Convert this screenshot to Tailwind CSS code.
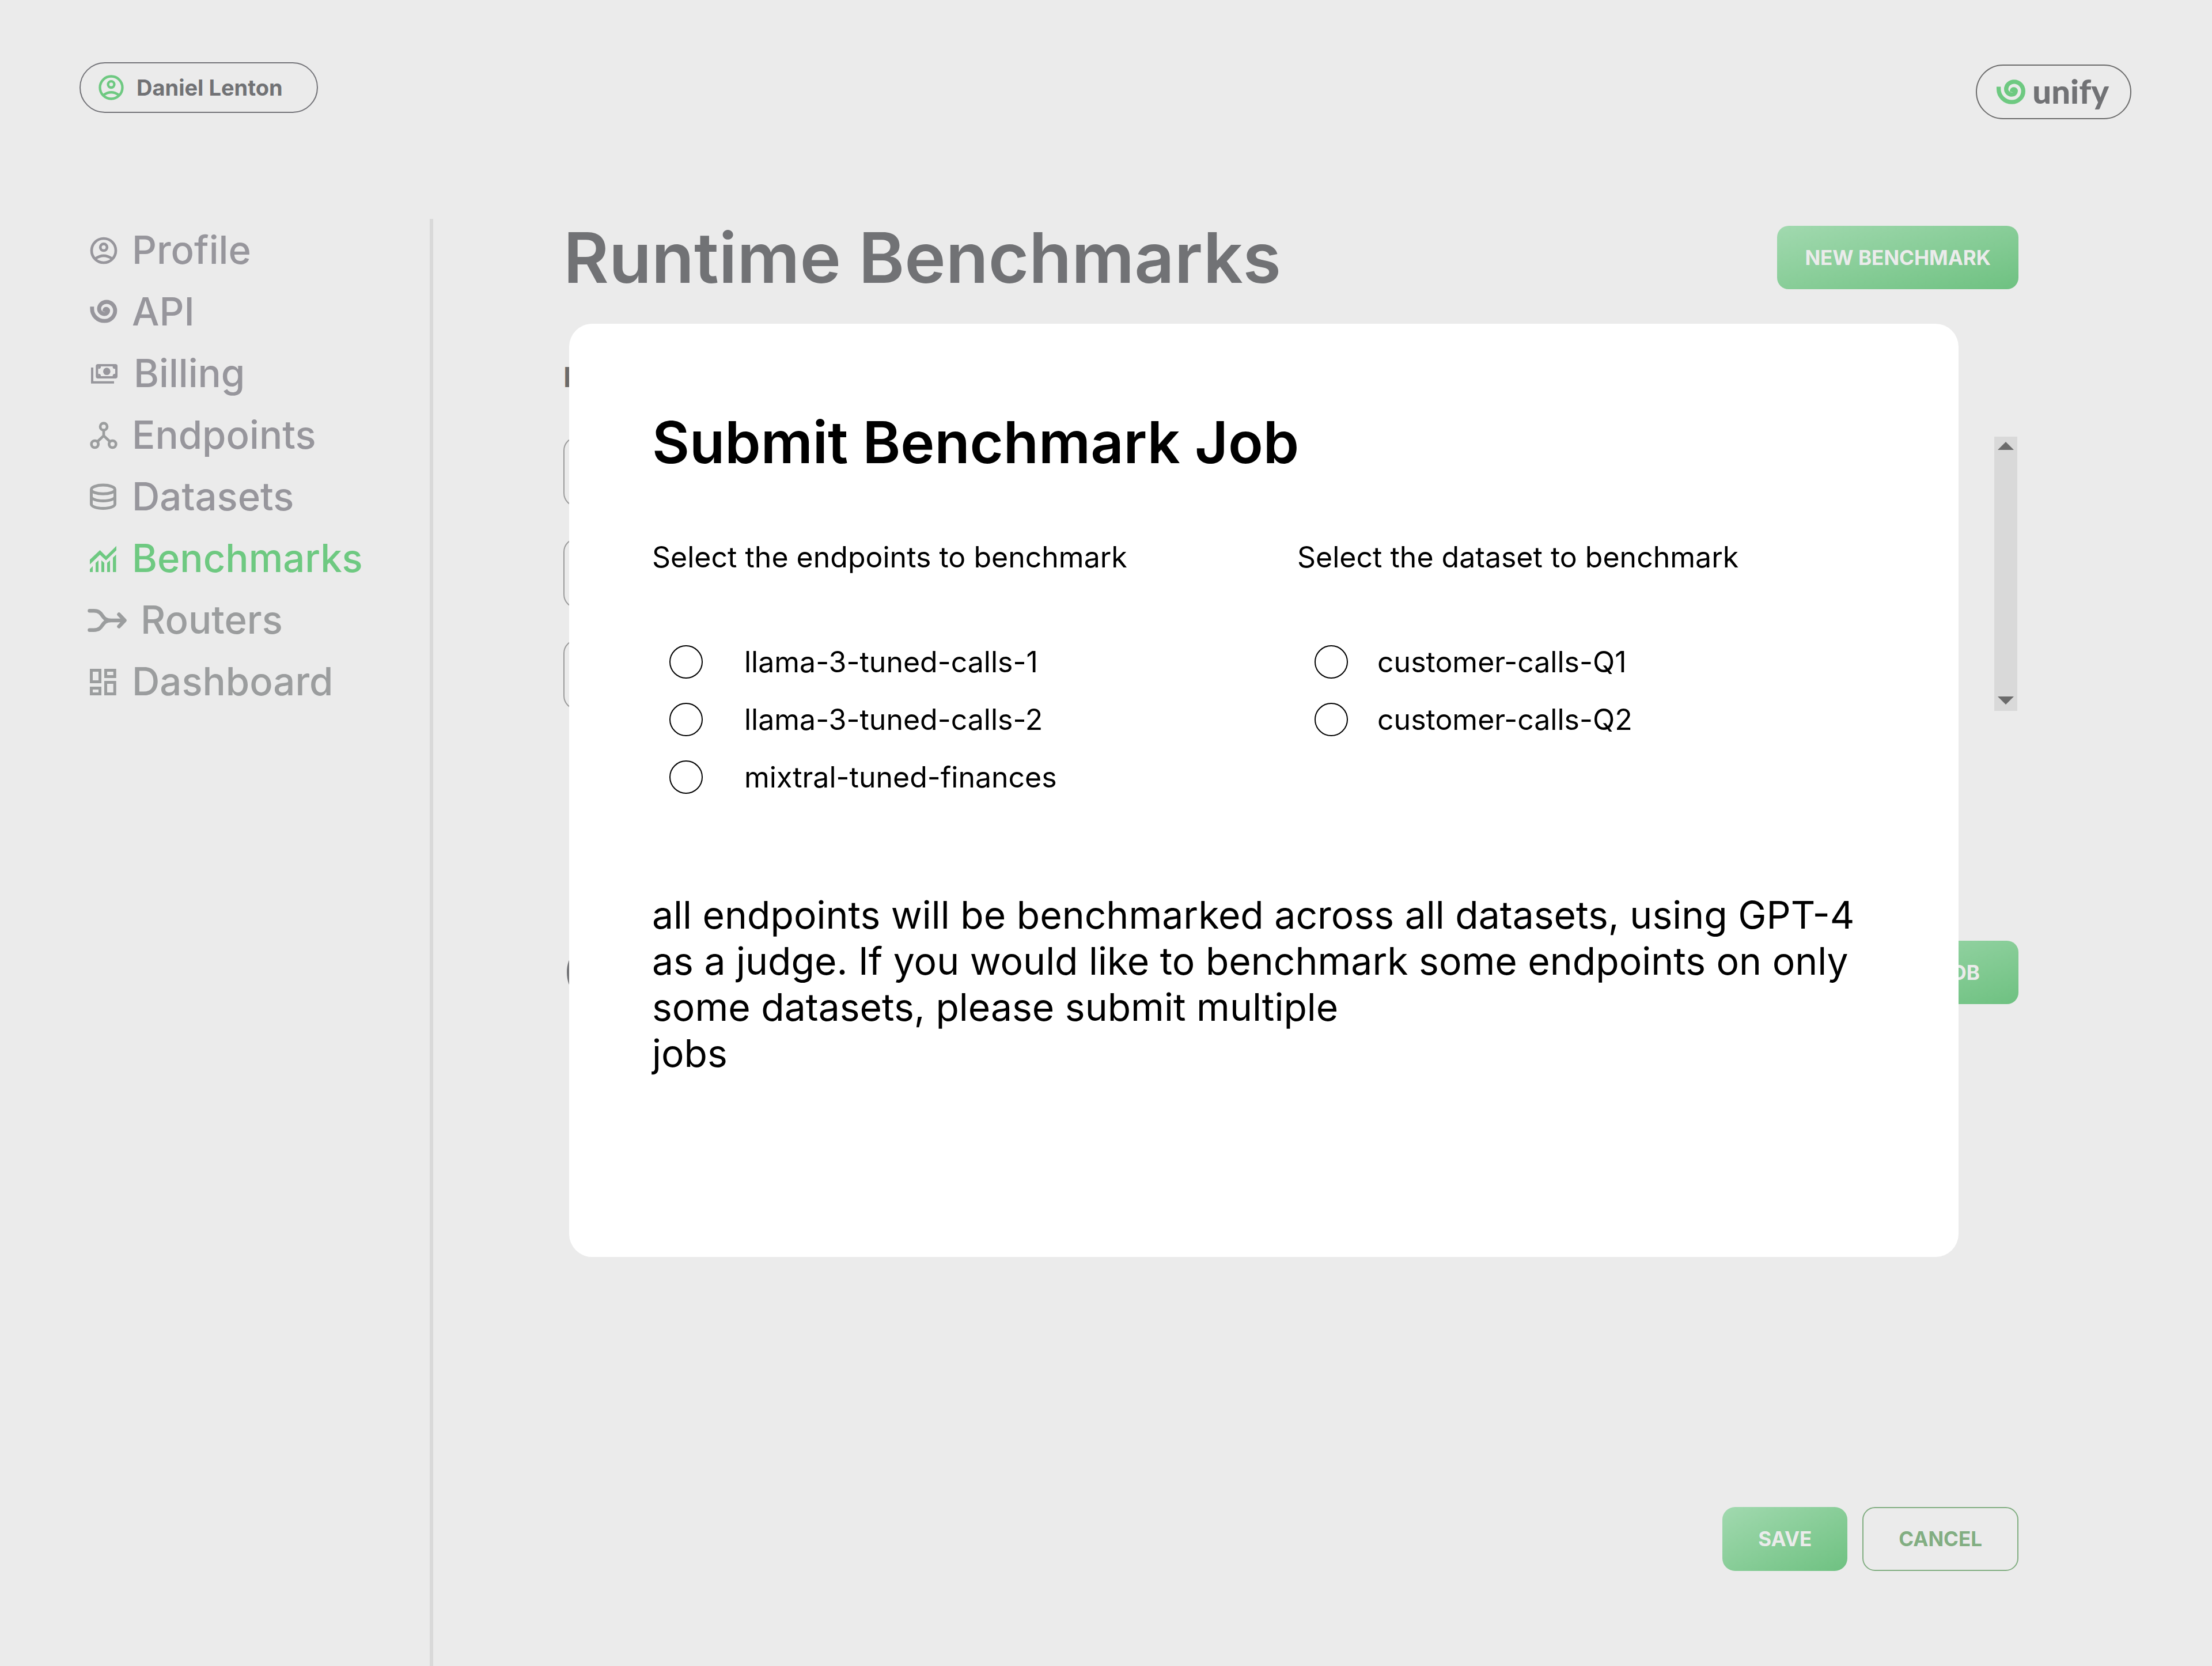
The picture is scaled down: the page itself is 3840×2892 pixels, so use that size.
<!DOCTYPE html>
<html lang="en">
<head>
<meta charset="utf-8">
<meta name="viewport" content="width=device-width, initial-scale=1">
<title>Runtime Benchmarks</title>
<script src="https://cdn.jsdelivr.net/npm/@tailwindcss/browser@4"></script>
</head>
<body class="flex min-h-screen flex-col bg-[#ebebeb] font-['Inter',sans-serif] text-[#717275]">

<header class="flex items-start justify-between pt-[108px] pr-[140px] pl-[138px]">
  <button type="button" class="flex h-[88px] items-center gap-[18px] rounded-full border-2 border-[#737378] pr-[59px] pl-[27px] text-[38px] font-bold">
    <svg class="size-[52px] text-[#6ec981]" viewBox="0 0 24 24" fill="none" stroke="currentColor" stroke-width="2" aria-hidden="true"><circle cx="12" cy="12" r="9"/><circle cx="12" cy="9.5" r="2.5"/><path d="M5.8 18Q12 13.6 18.2 18"/></svg>
    Daniel Lenton
  </button>
  <a href="#" class="mt-1 flex h-[95px] items-center gap-[12px] rounded-full border-2 border-[#6b6b6b] pr-[37px] pl-[34px] font-['Lato',sans-serif] text-[58px] leading-none font-black">
    <svg class="h-[43px] w-[50px] text-[#6ec981]" viewBox="195 143 150 128" fill="none" stroke="currentColor" stroke-width="22" aria-hidden="true"><path d="M206 180V192A69 68 0 0 0 275 260A59 57 0 0 0 334 203A48 49 0 0 0 286 154A41 39 0 0 0 245 193A30 29 0 0 0 275 221A20 19 0 0 0 295 203A10 10 0 0 0 285 193Q278 193 276 199L274 208"/></svg>
    <span class="-mt-1">unify</span>
  </a>
</header>

<div class="mt-[173px] flex grow">
  <nav class="w-[752px] shrink-0 border-r-6 border-[#d9d9d9] pt-px pl-[152px] text-[67px] font-medium text-[#97969c]" aria-label="Account">
    <ul>
      <li><a href="#" class="flex h-[107px] items-center gap-[21px]">
        <svg class="size-[56px]" viewBox="0 0 24 24" fill="none" stroke="currentColor" stroke-width="2" aria-hidden="true"><circle cx="12" cy="12" r="9"/><circle cx="12" cy="9.5" r="2.5"/><path d="M5.8 18Q12 13.6 18.2 18"/></svg>
        Profile</a></li>
      <li><a href="#" class="flex h-[107px] items-center gap-[21px]">
        <svg class="size-[56px]" viewBox="181 122 179 179" fill="none" stroke="currentColor" stroke-width="22" aria-hidden="true"><path d="M206 180V192A69 68 0 0 0 275 260A59 57 0 0 0 334 203A48 49 0 0 0 286 154A41 39 0 0 0 245 193A30 29 0 0 0 275 221A20 19 0 0 0 295 203A10 10 0 0 0 285 193Q278 193 276 199L274 208"/></svg>
        API</a></li>
      <li><a href="#" class="flex h-[107px] items-center gap-[24px]">
        <svg class="size-[56px]" viewBox="66 750 168 168" fill="none" stroke="currentColor" aria-hidden="true"><path stroke-width="12" d="M90 801V878H204"/><rect x="115" y="789" width="101" height="63" rx="5" stroke-width="12"/><circle cx="166" cy="821" r="19" fill="currentColor" stroke="none"/><path stroke="none" fill="currentColor" d="M121 795H135V800Q133 808 121 808ZM210 795H197V800Q199 808 210 808ZM121 846H135V841Q133 833 121 833ZM210 846H197V841Q199 833 210 833Z"/></svg>
        Billing</a></li>
      <li><a href="#" class="flex h-[107px] items-center gap-[21px]">
        <svg class="size-[56px] text-[#9b9d9e]" viewBox="64 1075 168 168" fill="none" stroke="currentColor" stroke-width="14" aria-hidden="true"><circle cx="148" cy="1113" r="18"/><circle cx="102" cy="1204" r="18"/><circle cx="194" cy="1204" r="18"/><path d="M148 1132V1162M114 1192L148 1160L182 1192"/></svg>
        Endpoints</a></li>
      <li><a href="#" class="flex h-[107px] items-center gap-[21px]">
        <svg class="size-[56px] text-[#9b9d9e]" viewBox="152 836 56 56" fill="none" stroke="currentColor" stroke-width="5" aria-hidden="true"><ellipse cx="179" cy="850.7" rx="20.5" ry="7.6"/><path d="M158.500 851V876C158.500 880 167 883.500 179 883.500S199.500 880 199.500 876V851M158.500 863C158.500 867 167 870.500 179 870.500S199.500 867 199.500 863"/></svg>
        Datasets</a></li>
      <li><a href="#" aria-current="page" class="flex h-[107px] items-center gap-[21px] text-[#6ec981]">
        <svg class="size-[56px]" viewBox="152 942 56 56" fill="currentColor" aria-hidden="true"><path d="M156 971.500L173.500 955L184 965.500L202 947.700V955.300L184 972.700L173.500 963L156 979.700ZM156 988L161 982.700V993H156ZM166 977L171 972.700V993H166ZM176 972.700L181 977V993H176ZM186 977L191 972.700V993H186ZM196 968L201.500 962.700V993H196Z"/></svg>
        Benchmarks</a></li>
      <li><a href="#" class="flex h-[107px] items-center gap-[24px] text-[#9b9d9e]">
        <svg class="h-[56px] w-[68px]" viewBox="152 1049 68 56" fill="none" stroke="currentColor" stroke-width="6.500" stroke-linecap="round" stroke-linejoin="round" aria-hidden="true"><path d="M155.500 1060.300H163C181 1060.300 174 1077 193 1077H216M155.500 1093.700H163C181 1093.700 174 1077 193 1077M206.500 1066.500L216.500 1077L206.500 1087.500"/></svg>
        Routers</a></li>
      <li><a href="#" class="flex h-[107px] items-center gap-[21px] text-[#9b9d9e]">
        <svg class="size-[56px]" viewBox="152 1156 56 56" fill="none" stroke="currentColor" stroke-width="5" aria-hidden="true"><path d="M158.500 1163.500H173.500V1183.500H158.500ZM158.500 1194.500H173.500V1204.500H158.500ZM183.500 1163.500H199.200V1174.500H183.500ZM183.500 1184.500H199.200V1204.500H183.500Z"/></svg>
        Dashboard</a></li>
    </ul>
  </nav>

  <main class="relative flex grow flex-col pt-[12px] pr-[336px] pb-[165px] pl-[226px]">
    <div class="flex items-center justify-between">
      <h1 class="text-[121px] leading-[110px] font-semibold">Runtime Benchmarks</h1>
      <button type="button" class="h-[110px] rounded-[20px] bg-linear-to-br from-[#a1d9af] to-[#6ec181] px-[48px] text-[35px] font-bold text-[#ebebeb]">NEW BENCHMARK</button>
    </div>

    <h2 class="mt-[123px] text-[48px] leading-[60px] font-bold text-[#6b6b6b]">Name</h2>
    <div class="mt-[73px] flex gap-[120px] pr-[2px]">
      <div class="flex grow flex-col gap-[54px]">
        <input type="text" aria-label="Benchmark 1" class="h-[122px] w-full rounded-[24px] border-2 border-[#9c9c9c]">
        <input type="text" aria-label="Benchmark 2" class="h-[122px] w-full rounded-[24px] border-2 border-[#9c9c9c]">
        <input type="text" aria-label="Benchmark 3" class="h-[122px] w-full rounded-[24px] border-2 border-[#9c9c9c]">
      </div>
      <div class="flex h-[476px] w-[40px] flex-col items-center justify-between bg-[#d9d9d9] pt-[9px] pb-[11px] text-[#6b6b6b]">
        <svg class="h-[14px] w-[28px]" viewBox="0 0 28 14" fill="currentColor" aria-hidden="true"><path d="M14 0L28 14H0Z"/></svg>
        <svg class="h-[14px] w-[28px]" viewBox="0 0 28 14" fill="currentColor" aria-hidden="true"><path d="M0 0H28L14 14Z"/></svg>
      </div>
    </div>

    <div class="mt-[399px] flex items-center justify-between">
      <h2 class="text-[121px] leading-[110px] font-semibold">Current Jobs</h2>
      <button type="button" class="h-[110px] rounded-[20px] bg-linear-to-br from-[#a1d9af] to-[#6ec181] px-[67px] text-[35px] font-bold text-[#ebebeb]">SUBMIT JOB</button>
    </div>

    <div class="mt-auto flex justify-end gap-[26px]">
      <button type="button" class="h-[111px] rounded-[22px] bg-linear-to-br from-[#a1d9af] to-[#6ec181] px-[62px] text-[35px] font-bold text-[#ebebeb]">SAVE</button>
      <button type="button" class="h-[111px] rounded-[22px] border-2 border-[#82ae82] px-[61px] text-[35px] font-bold text-[#82ae82]">CANCEL</button>
    </div>

    <section role="dialog" aria-labelledby="dialog-title" class="absolute top-[182px] right-[440px] left-[236px] rounded-[40px] bg-white px-[144px] pt-[145px] pb-[314px] text-[50px] text-black">
      <h2 id="dialog-title" class="text-[100px] leading-[122px] font-semibold">Submit Benchmark Job</h2>
      <form class="mt-[108px] flex">
        <fieldset class="w-[1120px]">
          <legend class="leading-[60px]">Select the endpoints to benchmark</legend>
          <div class="mt-[102px] pl-[30px]">
            <label class="flex h-[100px] items-center gap-[72px]"><input type="radio" name="endpoint" class="size-[58px] appearance-none rounded-full border-2 border-black checked:bg-[#6ec981]">llama-3-tuned-calls-1</label>
            <label class="flex h-[100px] items-center gap-[72px]"><input type="radio" name="endpoint" class="size-[58px] appearance-none rounded-full border-2 border-black checked:bg-[#6ec981]">llama-3-tuned-calls-2</label>
            <label class="flex h-[100px] items-center gap-[72px]"><input type="radio" name="endpoint" class="size-[58px] appearance-none rounded-full border-2 border-black checked:bg-[#6ec981]">mixtral-tuned-finances</label>
          </div>
        </fieldset>
        <fieldset>
          <legend class="leading-[60px]">Select the dataset to benchmark</legend>
          <div class="mt-[102px] pl-[30px]">
            <label class="flex h-[100px] items-center gap-[51px]"><input type="radio" name="dataset" class="size-[58px] appearance-none rounded-full border-2 border-black checked:bg-[#6ec981]">customer-calls-Q1</label>
            <label class="flex h-[100px] items-center gap-[51px]"><input type="radio" name="dataset" class="size-[58px] appearance-none rounded-full border-2 border-black checked:bg-[#6ec981]">customer-calls-Q2</label>
          </div>
        </fieldset>
      </form>
      <p class="mt-[149px] text-[66px] leading-[80px]">all endpoints will be benchmarked across all datasets, using GPT-4 as a judge. If you would like to benchmark some endpoints on only some datasets, please submit multiple<br>jobs</p>
    </section>
  </main>
</div>
</body>
</html>
